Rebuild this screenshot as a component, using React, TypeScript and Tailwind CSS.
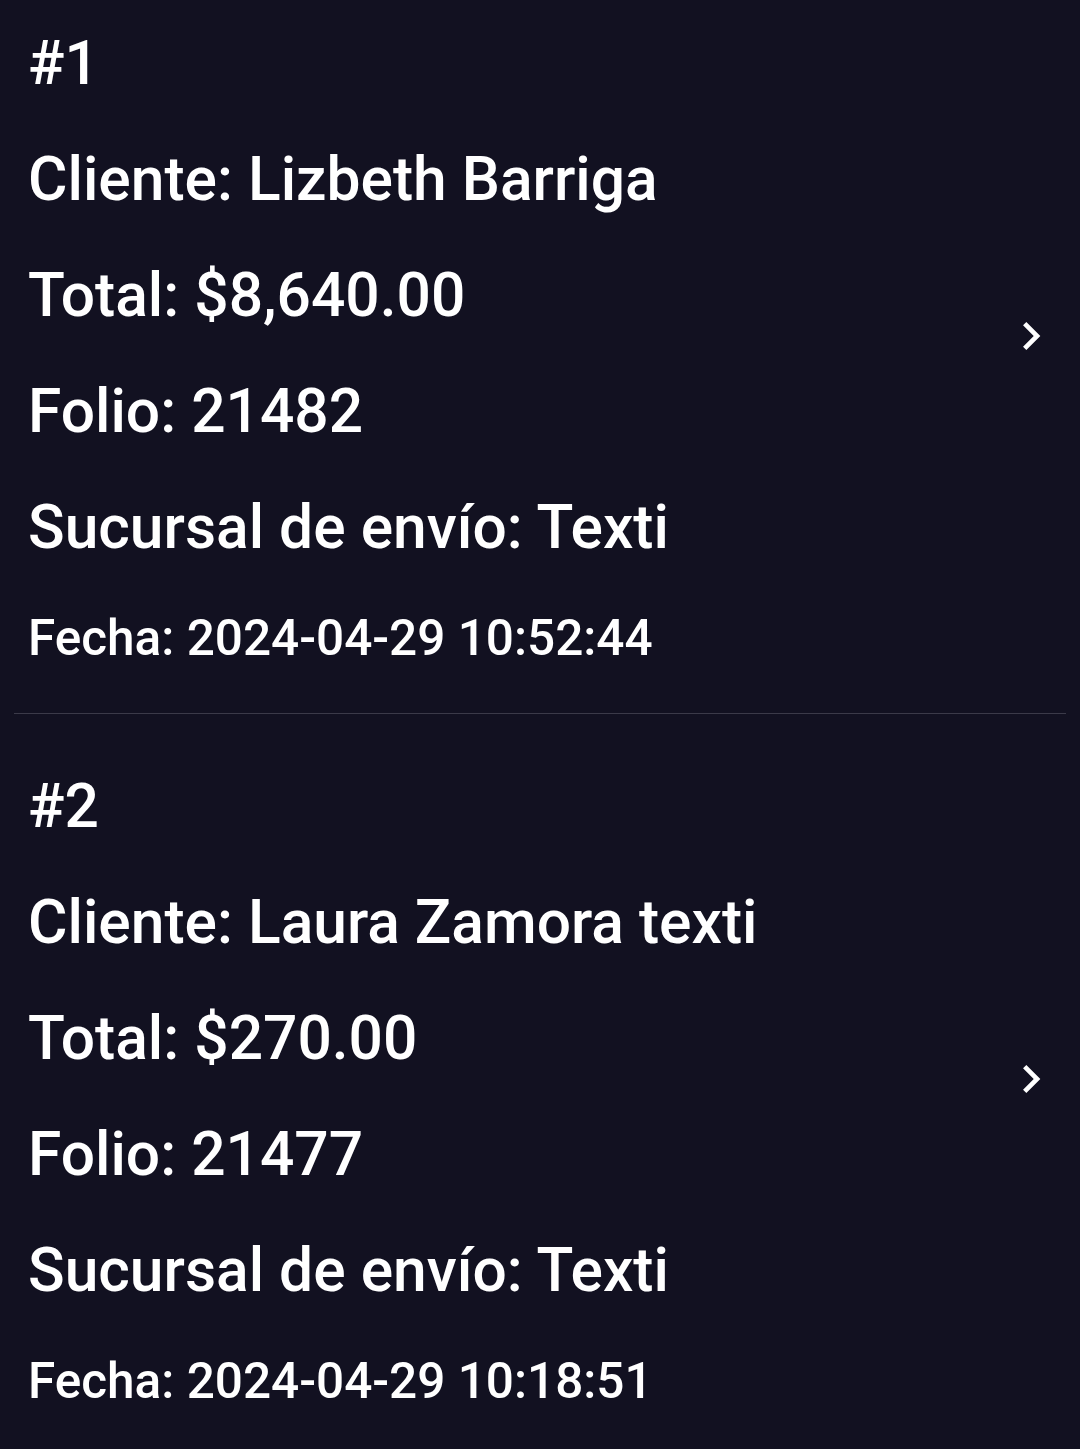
import React from 'react';

interface Pedido {
  num: number;
  cliente: string;
  total: string;
  folio: string;
  sucursal: string;
  fecha: string;
}

const pedidos: Pedido[] = [
  {
    num: 1,
    cliente: 'Lizbeth Barriga',
    total: '$8,640.00',
    folio: '21482',
    sucursal: 'Texti',
    fecha: '2024-04-29 10:52:44',
  },
  {
    num: 2,
    cliente: 'Laura Zamora texti',
    total: '$270.00',
    folio: '21477',
    sucursal: 'Texti',
    fecha: '2024-04-29 10:18:51',
  },
];

const ChevronRight = () => (
  <svg width="56" height="56" viewBox="0 0 24 24" fill="#ffffff">
    <path d="M10 6L8.59 7.41 13.17 12l-4.58 4.59L10 18l6-6z" />
  </svg>
);

const PedidoItem: React.FC<{ pedido: Pedido }> = ({ pedido }) => {
  return (
    <div className="flex items-center pl-[28px] pr-[21px] pt-[35px] pb-[23px]">
      <div className="flex-1 text-white font-medium">
        <div className="text-[60.5px] leading-[116px]">#{pedido.num}</div>
        <div className="text-[60.5px] leading-[116px]">Cliente: {pedido.cliente}</div>
        <div className="text-[60.5px] leading-[116px]">Total: {pedido.total}</div>
        <div className="text-[60.5px] leading-[116px]">Folio: {pedido.folio}</div>
        <div className="text-[60.5px] leading-[116px]">Sucursal de envío: {pedido.sucursal}</div>
        <div className="text-[49.5px] leading-[104px]">Fecha: {pedido.fecha}</div>
      </div>
      <div className="pb-[24px]">
        <ChevronRight />
      </div>
    </div>
  );
};

const App: React.FC = () => {
  return (
    <div
      className="w-[1080px] h-[1449px] overflow-hidden bg-[#121121]"
      style={{ fontFamily: 'Roboto, "Noto Sans", sans-serif' }}
    >
      <div className="-mt-[29px]">
        {pedidos.map((p, i) => (
          <div key={p.num}>
            <PedidoItem pedido={p} />
            {i < pedidos.length - 1 && <div className="mx-[14px] h-px bg-[#3b3a49]" />}
          </div>
        ))}
      </div>
    </div>
  );
};

export default App;
